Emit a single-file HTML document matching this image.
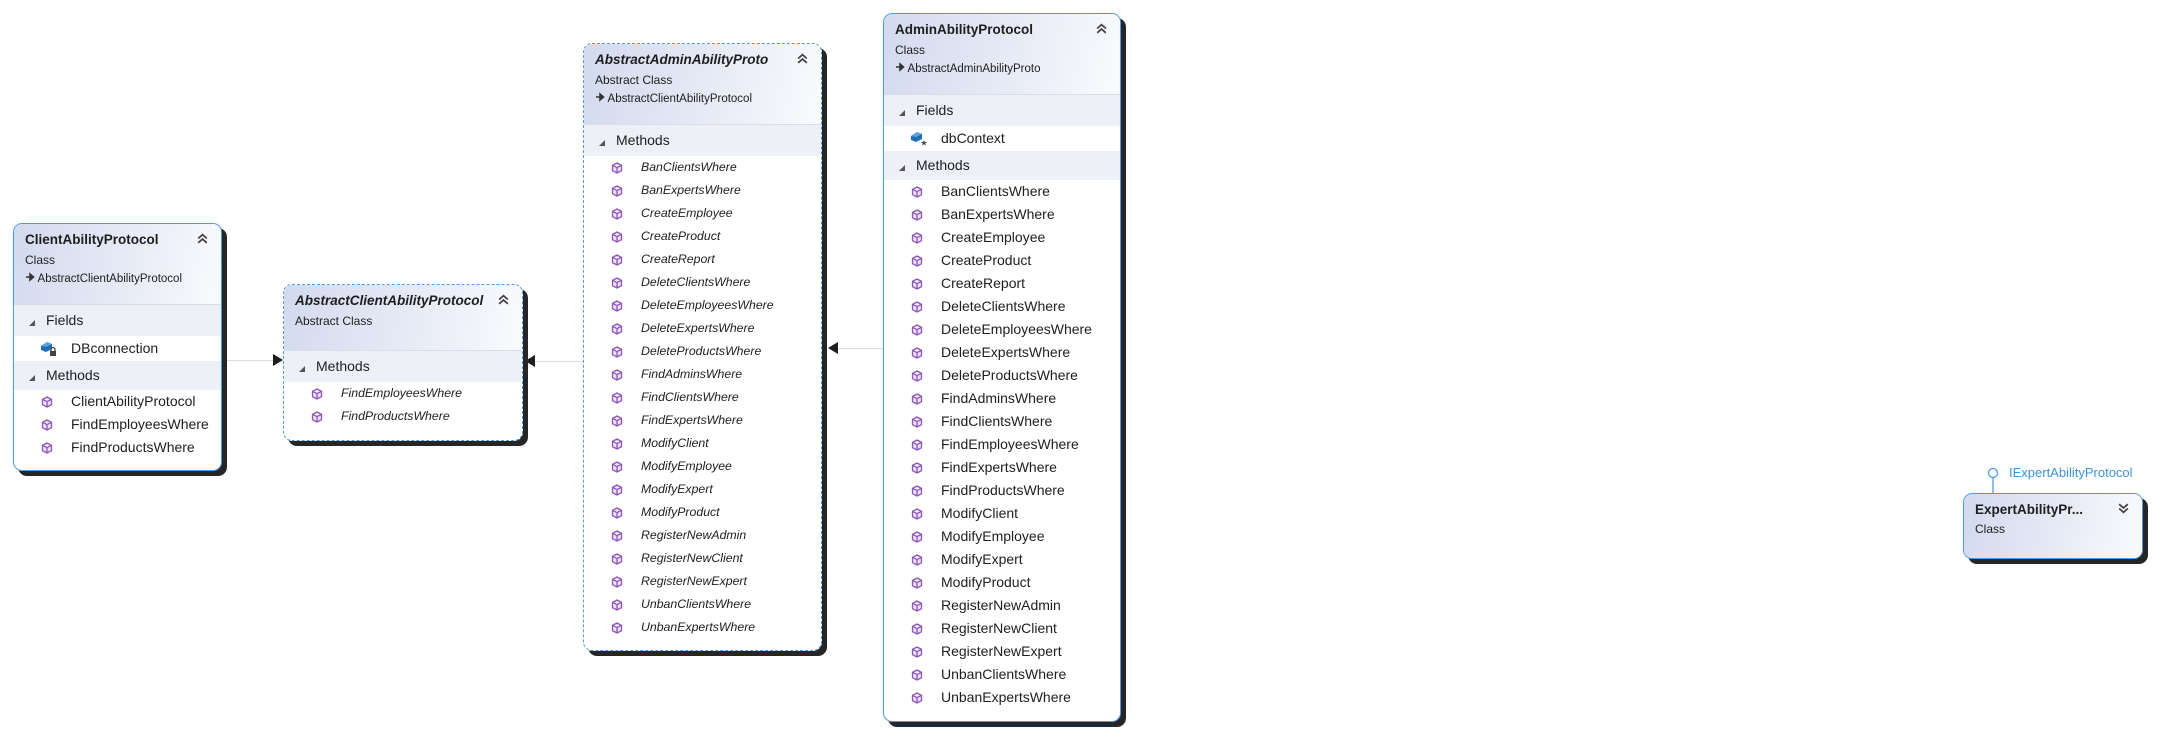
<!DOCTYPE html>
<html><head><meta charset="utf-8"><style>
*{margin:0;padding:0;box-sizing:border-box}
body{width:2171px;height:733px;background:#fff;position:relative;overflow:hidden;font-family:"Liberation Sans",sans-serif;color:#1e1e1e}
.box{position:absolute;border:1px solid #4d9be6;border-radius:9px;background:#fff;box-shadow:5px 5px 0 #262626;overflow:hidden}
.dash{border-style:dashed}
.hd{position:relative;background:linear-gradient(100deg,#d3daee 0%,#e7ebf6 55%,#fafbfe 100%);border-bottom:1px solid #d9dde8}
.t{position:absolute;left:11px;top:8px;font-weight:bold;font-size:13.5px;white-space:nowrap}
.i .t{font-style:italic}
.s1{position:absolute;left:11px;top:29px;font-size:12px}
.s2{position:absolute;left:11px;top:48px;font-size:11.5px;white-space:nowrap}
.chev{position:absolute;right:12px;top:8px}
.sec{height:31px;background:#eef0f8;font-size:14px;position:relative;line-height:31px;padding-left:32px}
.sec.m{height:29px;line-height:29px}
.sec:before{content:"";position:absolute;left:15px;top:50%;margin-top:-1px;border-left:6px solid transparent;border-bottom:6px solid #555}
.f{height:25px;line-height:25px;font-size:14px;padding-left:57px;position:relative}
.f svg{position:absolute;left:26px;top:4px}
.it{height:23px;line-height:23px;font-size:14px;padding-left:57px;position:relative;white-space:nowrap}
.it svg{position:absolute;left:27px;top:6px}
.i .it{font-size:12.3px;font-style:italic}
.line{position:absolute;height:1px;background:#dcdcdc}
.ah{position:absolute;width:0;height:0;border-top:6px solid transparent;border-bottom:6px solid transparent}
</style></head><body>
<svg width="0" height="0" style="position:absolute"><defs>
<symbol id="cube" viewBox="0 0 12 12"><path d="M6 1 L10.5 3.3 V8.7 L6 11 L1.5 8.7 V3.3 Z M1.5 3.3 L6 5.6 L10.5 3.3 M6 5.6 V11" fill="#ece2f5" stroke="#8d55bd" stroke-width="1.3" stroke-linejoin="round"/></symbol>
<symbol id="ch" viewBox="0 0 12 12"><path d="M2 6 L6 2.5 L10 6 M2 10 L6 6.5 L10 10" fill="none" stroke="#444" stroke-width="1.6"/></symbol>
<symbol id="chd" viewBox="0 0 12 12"><path d="M2 2 L6 5.5 L10 2 M2 6 L6 9.5 L10 6" fill="none" stroke="#444" stroke-width="1.6"/></symbol>
<symbol id="arr" viewBox="0 0 10 10"><path d="M1 5 H6 M5 2 L8.5 5 L5 8 Z" fill="#333" stroke="#333" stroke-width="1.6"/></symbol>
</defs></svg>

<!-- connectors -->
<div class="line" style="left:222px;top:360px;width:52px"></div>
<div class="ah" style="left:273px;top:354px;border-left:10px solid #1e1e1e"></div>
<div class="line" style="left:535px;top:361px;width:48px"></div>
<div class="ah" style="left:525px;top:355px;border-right:10px solid #1e1e1e"></div>
<div class="line" style="left:838px;top:348px;width:45px"></div>
<div class="ah" style="left:828px;top:342px;border-right:10px solid #1e1e1e"></div>

<!-- ClientAbilityProtocol -->
<div class="box" style="left:13px;top:223px;width:209px;height:248px">
<div class="hd" style="height:81px"><div class="t">ClientAbilityProtocol</div><svg class="chev" width="13" height="13"><use href="#ch"/></svg><div class="s1">Class</div><div class="s2"><svg width="10" height="10"><use href="#arr"/></svg> AbstractClientAbilityProtocol</div></div>
<div class="sec">Fields</div>
<div class="f"><svg width="18" height="17" viewBox="0 0 18 17"><path d="M1 6 L7 2 L12 4 L12 9 L6 12 L1 10 Z" fill="#1b6fb8"/><path d="M1 6 L7 2 L12 4 L6 7 Z" fill="#5ba3e0"/><rect x="10" y="11" width="6" height="5" fill="#444"/><path d="M11 11 V9.5 A2 2 0 0 1 15 9.5 V11" fill="none" stroke="#444" stroke-width="1.3"/></svg>DBconnection</div>
<div class="sec m">Methods</div>
<div class="it"><svg width="12" height="12"><use href="#cube"/></svg>ClientAbilityProtocol</div>
<div class="it"><svg width="12" height="12"><use href="#cube"/></svg>FindEmployeesWhere</div>
<div class="it"><svg width="12" height="12"><use href="#cube"/></svg>FindProductsWhere</div>
</div>

<!-- AbstractClientAbilityProtocol -->
<div class="box dash i" style="left:283px;top:284px;width:240px;height:157px">
<div class="hd" style="height:66px"><div class="t">AbstractClientAbilityProtocol</div><svg class="chev" width="13" height="13"><use href="#ch"/></svg><div class="s1" style="font-style:normal">Abstract Class</div></div>
<div class="sec">Methods</div>
<div class="it"><svg width="12" height="12"><use href="#cube"/></svg>FindEmployeesWhere</div>
<div class="it"><svg width="12" height="12"><use href="#cube"/></svg>FindProductsWhere</div>
</div>

<!-- AbstractAdminAbilityProto -->
<div class="box dash i" style="left:583px;top:43px;width:239px;height:608px">
<div class="hd" style="height:81px"><div class="t">AbstractAdminAbilityProto</div><svg class="chev" width="13" height="13"><use href="#ch"/></svg><div class="s1">Abstract Class</div><div class="s2"><svg width="10" height="10"><use href="#arr"/></svg> AbstractClientAbilityProtocol</div></div>
<div class="sec">Methods</div>
<div class="it"><svg width="12" height="12"><use href="#cube"/></svg>BanClientsWhere</div>
<div class="it"><svg width="12" height="12"><use href="#cube"/></svg>BanExpertsWhere</div>
<div class="it"><svg width="12" height="12"><use href="#cube"/></svg>CreateEmployee</div>
<div class="it"><svg width="12" height="12"><use href="#cube"/></svg>CreateProduct</div>
<div class="it"><svg width="12" height="12"><use href="#cube"/></svg>CreateReport</div>
<div class="it"><svg width="12" height="12"><use href="#cube"/></svg>DeleteClientsWhere</div>
<div class="it"><svg width="12" height="12"><use href="#cube"/></svg>DeleteEmployeesWhere</div>
<div class="it"><svg width="12" height="12"><use href="#cube"/></svg>DeleteExpertsWhere</div>
<div class="it"><svg width="12" height="12"><use href="#cube"/></svg>DeleteProductsWhere</div>
<div class="it"><svg width="12" height="12"><use href="#cube"/></svg>FindAdminsWhere</div>
<div class="it"><svg width="12" height="12"><use href="#cube"/></svg>FindClientsWhere</div>
<div class="it"><svg width="12" height="12"><use href="#cube"/></svg>FindExpertsWhere</div>
<div class="it"><svg width="12" height="12"><use href="#cube"/></svg>ModifyClient</div>
<div class="it"><svg width="12" height="12"><use href="#cube"/></svg>ModifyEmployee</div>
<div class="it"><svg width="12" height="12"><use href="#cube"/></svg>ModifyExpert</div>
<div class="it"><svg width="12" height="12"><use href="#cube"/></svg>ModifyProduct</div>
<div class="it"><svg width="12" height="12"><use href="#cube"/></svg>RegisterNewAdmin</div>
<div class="it"><svg width="12" height="12"><use href="#cube"/></svg>RegisterNewClient</div>
<div class="it"><svg width="12" height="12"><use href="#cube"/></svg>RegisterNewExpert</div>
<div class="it"><svg width="12" height="12"><use href="#cube"/></svg>UnbanClientsWhere</div>
<div class="it"><svg width="12" height="12"><use href="#cube"/></svg>UnbanExpertsWhere</div>
</div>

<!-- AdminAbilityProtocol -->
<div class="box" style="left:883px;top:13px;width:238px;height:709px">
<div class="hd" style="height:81px"><div class="t">AdminAbilityProtocol</div><svg class="chev" width="13" height="13"><use href="#ch"/></svg><div class="s1">Class</div><div class="s2"><svg width="10" height="10"><use href="#arr"/></svg> AbstractAdminAbilityProto</div></div>
<div class="sec">Fields</div>
<div class="f"><svg width="18" height="17" viewBox="0 0 18 17"><path d="M1 6 L7 2 L12 4 L12 9 L6 12 L1 10 Z" fill="#1b6fb8"/><path d="M1 6 L7 2 L12 4 L6 7 Z" fill="#5ba3e0"/><path d="M14 10 L14.8 12 L17 12 L15.2 13.3 L15.9 15.5 L14 14.2 L12.1 15.5 L12.8 13.3 L11 12 L13.2 12 Z" fill="#444"/></svg>dbContext</div>
<div class="sec m">Methods</div>
<div class="it"><svg width="12" height="12"><use href="#cube"/></svg>BanClientsWhere</div>
<div class="it"><svg width="12" height="12"><use href="#cube"/></svg>BanExpertsWhere</div>
<div class="it"><svg width="12" height="12"><use href="#cube"/></svg>CreateEmployee</div>
<div class="it"><svg width="12" height="12"><use href="#cube"/></svg>CreateProduct</div>
<div class="it"><svg width="12" height="12"><use href="#cube"/></svg>CreateReport</div>
<div class="it"><svg width="12" height="12"><use href="#cube"/></svg>DeleteClientsWhere</div>
<div class="it"><svg width="12" height="12"><use href="#cube"/></svg>DeleteEmployeesWhere</div>
<div class="it"><svg width="12" height="12"><use href="#cube"/></svg>DeleteExpertsWhere</div>
<div class="it"><svg width="12" height="12"><use href="#cube"/></svg>DeleteProductsWhere</div>
<div class="it"><svg width="12" height="12"><use href="#cube"/></svg>FindAdminsWhere</div>
<div class="it"><svg width="12" height="12"><use href="#cube"/></svg>FindClientsWhere</div>
<div class="it"><svg width="12" height="12"><use href="#cube"/></svg>FindEmployeesWhere</div>
<div class="it"><svg width="12" height="12"><use href="#cube"/></svg>FindExpertsWhere</div>
<div class="it"><svg width="12" height="12"><use href="#cube"/></svg>FindProductsWhere</div>
<div class="it"><svg width="12" height="12"><use href="#cube"/></svg>ModifyClient</div>
<div class="it"><svg width="12" height="12"><use href="#cube"/></svg>ModifyEmployee</div>
<div class="it"><svg width="12" height="12"><use href="#cube"/></svg>ModifyExpert</div>
<div class="it"><svg width="12" height="12"><use href="#cube"/></svg>ModifyProduct</div>
<div class="it"><svg width="12" height="12"><use href="#cube"/></svg>RegisterNewAdmin</div>
<div class="it"><svg width="12" height="12"><use href="#cube"/></svg>RegisterNewClient</div>
<div class="it"><svg width="12" height="12"><use href="#cube"/></svg>RegisterNewExpert</div>
<div class="it"><svg width="12" height="12"><use href="#cube"/></svg>UnbanClientsWhere</div>
<div class="it"><svg width="12" height="12"><use href="#cube"/></svg>UnbanExpertsWhere</div>
</div>

<!-- Expert -->
<svg style="position:absolute;left:1985px;top:465px" width="20" height="30"><circle cx="8" cy="8" r="4.5" fill="#fff" stroke="#4d9be6" stroke-width="1.3"/><line x1="8" y1="12.5" x2="8" y2="30" stroke="#4d9be6" stroke-width="1.3"/></svg>
<div style="position:absolute;left:2009px;top:465px;font-size:13px;color:#3c94e6;white-space:nowrap">IExpertAbilityProtocol</div>
<div class="box" style="left:1963px;top:493px;width:180px;height:66px">
<div class="hd" style="height:66px;border:0;background:linear-gradient(100deg,#d3daee 0%,#e7ebf6 55%,#fafbfe 100%)"><div class="t">ExpertAbilityPr...</div><svg class="chev" width="13" height="13"><use href="#chd"/></svg><div class="s1" style="top:28px">Class</div></div>
</div>
</body></html>
